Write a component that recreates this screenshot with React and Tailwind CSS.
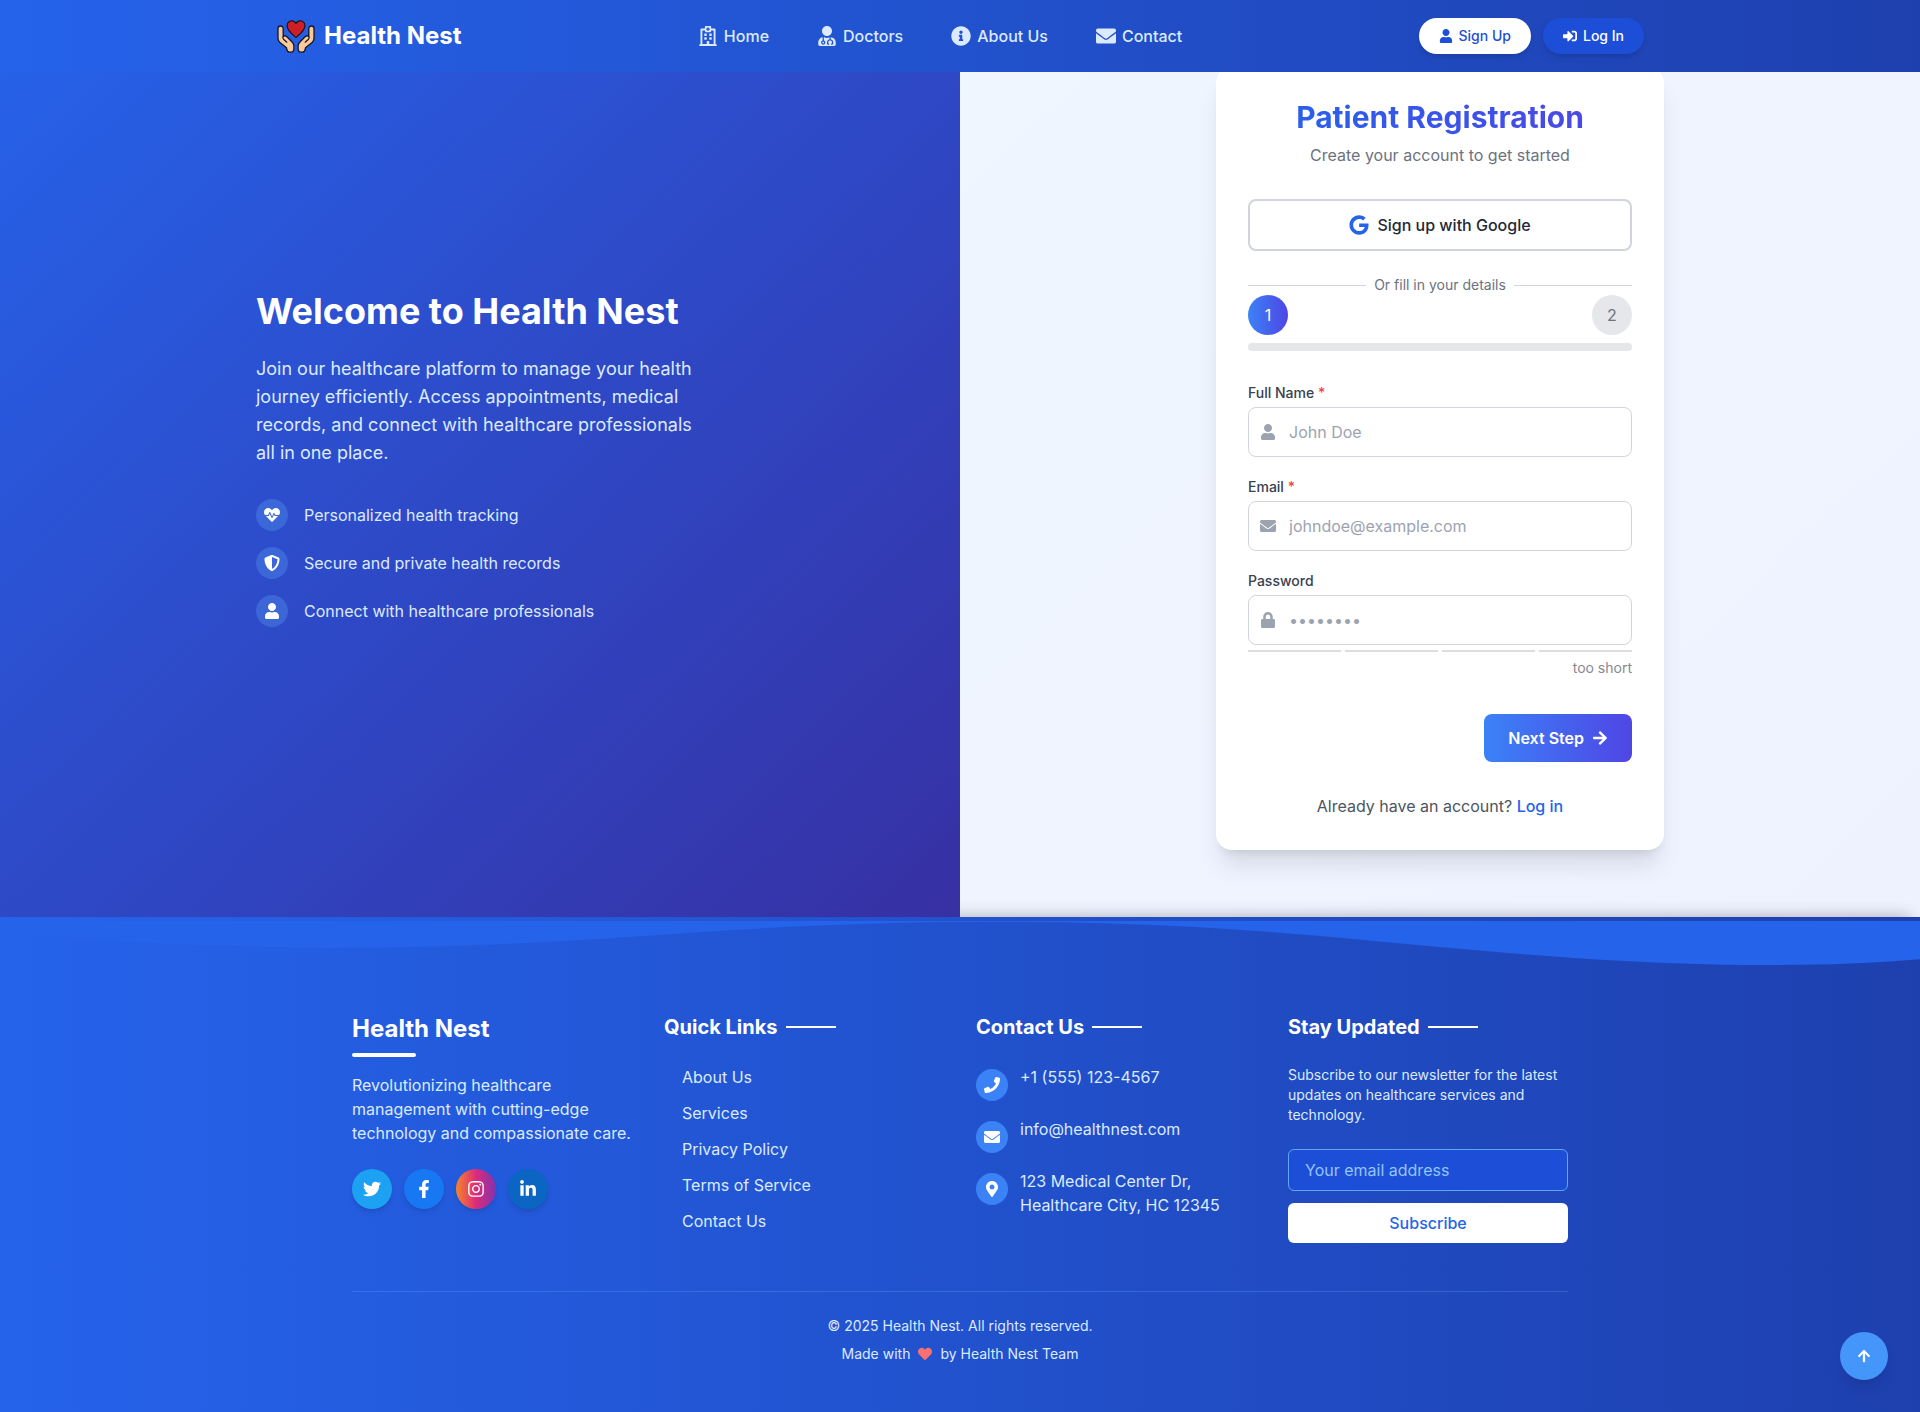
import {
  FaArrowRight,
  FaArrowUp,
  FaEnvelope,
  FaFacebookF,
  FaGoogle,
  FaHeart,
  FaHeartbeat,
  FaInfoCircle,
  FaInstagram,
  FaLinkedinIn,
  FaLock,
  FaMapMarkerAlt,
  FaPhone,
  FaRegHospital,
  FaShieldAlt,
  FaSignInAlt,
  FaTwitter,
  FaUser,
  FaUserMd,
} from "react-icons/fa";

const navLinks = [
  { label: "Home", icon: FaRegHospital },
  { label: "Doctors", icon: FaUserMd },
  { label: "About Us", icon: FaInfoCircle },
  { label: "Contact", icon: FaEnvelope },
];

const features = [
  { label: "Personalized health tracking", icon: FaHeartbeat },
  { label: "Secure and private health records", icon: FaShieldAlt },
  { label: "Connect with healthcare professionals", icon: FaUser },
];

const quickLinks = ["About Us", "Services", "Privacy Policy", "Terms of Service", "Contact Us"];

const socials = [
  { label: "Twitter", icon: FaTwitter, style: "bg-[#1da1f2]" },
  { label: "Facebook", icon: FaFacebookF, style: "bg-[#1877f2]" },
  {
    label: "Instagram",
    icon: FaInstagram,
    style: "bg-linear-to-r/srgb from-[#f58529] via-[#dd2a7b] to-[#8134af]",
  },
  { label: "LinkedIn", icon: FaLinkedinIn, style: "bg-[#0a66c2]" },
];

const contacts = [
  { icon: FaPhone, lines: ["+1 (555) 123-4567"] },
  { icon: FaEnvelope, lines: ["info@healthnest.com"] },
  { icon: FaMapMarkerAlt, lines: ["123 Medical Center Dr,", "Healthcare City, HC 12345"] },
];

function Hand() {
  return (
    <>
      <path
        d="M2 12.6a2.6 2.6 0 0 1 5.2 0v7.9c1.2-.9 2.7-.7 3.7.3l5.2 5.2c1.3 1.3 1.8 2.6 1.8 4.2v2.2c0 2.6-.9 3.7-2.8 3.7h-1.6c-1.7 0-2.5-1-2.8-3.200l-.2-1.100-6.600-5.400C2.600 25.400 2 24.200 2 22.600z"
        fill="#fbc99a"
        stroke="#111827"
        strokeWidth="1.3"
        strokeLinejoin="round"
      />
      <path
        d="M7.2 20.5c-.6.9-.5 1.900.3 2.700l3.300 3"
        fill="none"
        stroke="#111827"
        strokeWidth="1.2"
        strokeLinecap="round"
      />
    </>
  );
}

function Logo() {
  return (
    <svg viewBox="0 0 40 40" className="size-10" aria-hidden="true">
      <Hand />
      <g transform="translate(40 0) scale(-1 1)">
        <Hand />
      </g>
      <path
        d="M20 21.5c-3.8-3.3-8.9-6.8-8.9-11.7 0-2.9 2-5 4.6-5 1.8 0 3.4.9 4.3 2.6.9-1.7 2.5-2.600 4.300-2.600 2.600 0 4.600 2.100 4.600 5 0 4.900-5.100 8.400-8.900 11.700z"
        fill="#cc1f26"
        stroke="#1f1418"
        strokeWidth="1.2"
        strokeLinejoin="round"
      />
    </svg>
  );
}

function Header() {
  return (
    <header className="fixed inset-x-0 top-0 z-30 bg-linear-to-r/srgb from-[#2563eb] to-[#1e40af]">
      <div className="mx-auto flex h-18 max-w-[1400px] items-center justify-between px-4">
        <a href="#" className="flex items-center gap-2 text-2xl font-bold text-white">
          <Logo />
          Health Nest
        </a>
        <nav className="flex items-center gap-12">
          {navLinks.map(({ label, icon: Icon }) => (
            <a
              key={label}
              href="#"
              className="flex items-center gap-1.5 text-base font-medium text-[#dbeafe]"
            >
              <Icon className="size-5" />
              {label}
            </a>
          ))}
        </nav>
        <div className="flex items-center gap-3">
          <button
            type="button"
            className="flex items-center gap-1.5 rounded-full bg-white px-5 py-2 text-sm font-medium text-[#1d4ed8] shadow-md"
          >
            <FaUser />
            Sign Up
          </button>
          <button
            type="button"
            className="flex items-center gap-1.5 rounded-full bg-[#1d4ed8] px-5 py-2 text-sm font-medium text-white shadow-md"
          >
            <FaSignInAlt />
            Log In
          </button>
        </div>
      </div>
    </header>
  );
}

function Welcome() {
  return (
    <div className="relative z-10 flex items-center bg-linear-to-br/srgb from-[#2563eb] to-[#3730a3]">
      <div className="mx-auto w-full max-w-md">
        <h1 className="text-4xl font-bold whitespace-nowrap text-white">Welcome to Health Nest</h1>
        <p className="mt-6 text-lg/7 text-[#dbeafe]">
          Join our healthcare platform to manage your health journey efficiently. Access
          appointments, medical records, and connect with healthcare professionals all in one place.
        </p>
        <ul className="mt-8 flex flex-col gap-4">
          {features.map(({ label, icon: Icon }) => (
            <li key={label} className="flex items-center gap-4 text-[#dbeafe]">
              <span className="flex size-8 items-center justify-center rounded-full bg-[#60a5fa]/30 text-white">
                <Icon />
              </span>
              {label}
            </li>
          ))}
        </ul>
      </div>
    </div>
  );
}

function Field({ id, label, required, icon: Icon, type, placeholder }) {
  return (
    <div>
      <label htmlFor={id} className="block text-sm font-medium text-[#374151]">
        {label} {required && <span className="text-[#ef4444]">*</span>}
      </label>
      <div className="relative mt-1">
        <Icon className="absolute inset-y-0 left-3 my-auto text-[#9ca3af]" />
        <input
          id={id}
          type={type}
          placeholder={placeholder}
          className="block w-full rounded-lg border border-[#d1d5db] bg-white py-3 pr-3 pl-10 placeholder:text-[#9ca3af]"
        />
      </div>
    </div>
  );
}

function Registration() {
  return (
    <div className="bg-linear-to-br/srgb from-[#eff6ff] to-[#eef2ff] py-[67px]">
      <form className="mx-auto max-w-md rounded-2xl bg-white p-8 shadow-xl">
        <h2 className="bg-linear-to-r/srgb from-[#2563eb] to-[#4f46e5] bg-clip-text text-center text-3xl font-bold text-transparent">
          Patient Registration
        </h2>
        <p className="mt-2 text-center text-[#6b7280]">Create your account to get started</p>

        <button
          type="button"
          className="mt-8 flex w-full items-center justify-center gap-2 rounded-lg border-2 border-[#d1d5db] bg-white py-3 font-medium text-[#1f2937]"
        >
          <FaGoogle className="size-5 text-[#2563eb]" />
          Sign up with Google
        </button>

        <div className="mt-6 flex items-center gap-2 text-sm text-[#6b7280]">
          <span className="h-px flex-1 bg-[#d1d5db]" />
          Or fill in your details
          <span className="h-px flex-1 bg-[#d1d5db]" />
        </div>

        <div className="flex justify-between">
          <span className="flex size-10 items-center justify-center rounded-full bg-linear-to-r/srgb from-[#3b82f6] to-[#4f46e5] text-white">
            1
          </span>
          <span className="flex size-10 items-center justify-center rounded-full bg-[#e5e7eb] text-[#6b7280]">
            2
          </span>
        </div>
        <div className="mt-2 h-2 rounded-full bg-[#e5e7eb]" />

        <div className="mt-8 flex flex-col gap-5">
          <Field id="name" label="Full Name" required icon={FaUser} type="text" placeholder="John Doe" />
          <Field
            id="email"
            label="Email"
            required
            icon={FaEnvelope}
            type="email"
            placeholder="johndoe@example.com"
          />
          <Field id="password" label="Password" icon={FaLock} type="password" placeholder="••••••••" />
        </div>
        <div className="mt-[5px] grid grid-cols-4 gap-1">
          <span className="h-0.5 bg-[#dddddd]" />
          <span className="h-0.5 bg-[#dddddd]" />
          <span className="h-0.5 bg-[#dddddd]" />
          <span className="h-0.5 bg-[#dddddd]" />
        </div>
        <p className="mt-1.5 text-right text-sm text-[#898792]">too short</p>

        <div className="mt-9 flex justify-end">
          <button
            type="button"
            className="flex items-center gap-2 rounded-lg bg-linear-to-r/srgb from-[#3b82f6] to-[#4f46e5] px-6 py-3 font-semibold text-white"
          >
            Next Step
            <FaArrowRight />
          </button>
        </div>

        <p className="mt-8 text-center text-[#4b5563]">
          Already have an account?{" "}
          <a href="#" className="font-medium text-[#2563eb]">
            Log in
          </a>
        </p>
      </form>
    </div>
  );
}

function FooterHeading({ children }) {
  return (
    <h3 className="flex items-center gap-2 text-xl font-bold text-white">
      {children}
      <span className="h-0.5 w-[50px] bg-white" />
    </h3>
  );
}

function Footer() {
  return (
    <footer className="relative bg-linear-to-r/srgb from-[#2563eb] to-[#1e40af] pt-24 pb-12 text-[#dbeafe] shadow-[0_-10px_15px_-10px_rgba(0,0,0,0.3)]">
      <svg
        viewBox="0 0 1200 120"
        preserveAspectRatio="none"
        className="absolute inset-x-0 top-1 h-12 w-full"
        aria-hidden="true"
      >
        <path
          d="M321.39,56.44c58-10.79,114.16-30.13,172-41.86,82.39-16.72,168.19-17.73,250.45-.39C823.78,31,906.67,72,985.66,92.83c70.05,18.48,146.53,26.09,214.34,3V0H0V27.35A600.21,600.21,0,0,0,321.39,56.44Z"
          fill="#2563eb"
        />
      </svg>
      <div className="mx-auto max-w-7xl px-8">
        <div className="grid grid-cols-4 gap-8">
          <div>
            <h2 className="text-2xl font-bold text-white">Health Nest</h2>
            <div className="mt-2 h-1 w-16 rounded-full bg-white" />
            <p className="mt-4">
              Revolutionizing healthcare management with cutting-edge technology and compassionate
              care.
            </p>
            <div className="mt-6 flex gap-3">
              {socials.map(({ label, icon: Icon, style }) => (
                <a
                  key={label}
                  href="#"
                  aria-label={label}
                  className={`flex size-10 items-center justify-center rounded-full text-lg text-white shadow-md ${style}`}
                >
                  <Icon />
                </a>
              ))}
            </div>
          </div>

          <div>
            <FooterHeading>Quick Links</FooterHeading>
            <ul className="mt-6 flex flex-col gap-3 pl-4.5">
              {quickLinks.map((label) => (
                <li key={label}>
                  <a href="#">{label}</a>
                </li>
              ))}
            </ul>
          </div>

          <div>
            <FooterHeading>Contact Us</FooterHeading>
            <ul className="mt-6 flex flex-col gap-4">
              {contacts.map(({ icon: Icon, lines }) => (
                <li key={lines[0]} className="flex items-start gap-3">
                  <span className="mt-1 flex size-8 shrink-0 items-center justify-center rounded-full bg-[#3b82f6] text-white">
                    <Icon />
                  </span>
                  <span>
                    {lines.map((line) => (
                      <span key={line} className="block">
                        {line}
                      </span>
                    ))}
                  </span>
                </li>
              ))}
            </ul>
          </div>

          <div>
            <FooterHeading>Stay Updated</FooterHeading>
            <p className="mt-6 text-sm">
              Subscribe to our newsletter for the latest updates on healthcare services and
              technology.
            </p>
            <input
              type="email"
              aria-label="Your email address"
              placeholder="Your email address"
              className="mt-6 block w-full rounded-md border border-[#60a5fa] bg-[#1d4ed8] px-4 py-2 text-white placeholder:text-[#93c5fd]"
            />
            <button
              type="button"
              className="mt-3 w-full rounded-md bg-white py-2 font-medium text-[#2563eb]"
            >
              Subscribe
            </button>
          </div>
        </div>

        <div className="mt-12 border-t border-[#60a5fa]/30 pt-6 text-center text-sm">
          <p>© 2025 Health Nest. All rights reserved.</p>
          <p className="mt-2 flex items-center justify-center gap-2">
            Made with
            <FaHeart className="text-[#f87171]" />
            by Health Nest Team
          </p>
        </div>
      </div>
    </footer>
  );
}

export default function App() {
  return (
    <div className="font-[Inter,sans-serif]">
      <Header />
      <main className="grid grid-cols-2">
        <Welcome />
        <Registration />
      </main>
      <Footer />
      <button
        type="button"
        aria-label="Back to top"
        className="fixed right-8 bottom-8 z-30 flex size-12 items-center justify-center rounded-full bg-[#4596fb] text-sm text-white shadow-lg"
      >
        <FaArrowUp />
      </button>
    </div>
  );
}
